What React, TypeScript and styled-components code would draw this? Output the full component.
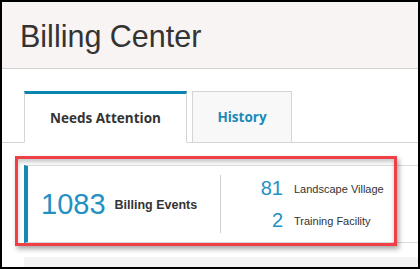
import styled, { createGlobalStyle } from "styled-components";

const GlobalStyle = createGlobalStyle`
  html, body {
    margin: 0;
    padding: 0;
    background: #ffffff;
  }
  body {
    font-family: "Liberation Sans", Arial, sans-serif;
  }
`;

const sites = [
  { count: 81, name: "Landscape Village" },
  { count: 2, name: "Training Facility" },
];

export default function App() {
  return (
    <>
      <GlobalStyle />
      <Frame>
        <Header>
          <Title>Billing Center</Title>
        </Header>
        <TabBar>
          <Tab $active>Needs Attention</Tab>
          <Tab>History</Tab>
        </TabBar>
        <Panel>
          <Card>
            <Summary>
              <BigCount>1083</BigCount>
              <SummaryLabel>Billing Events</SummaryLabel>
            </Summary>
            <Divider />
            <SiteGrid>
              {sites.map((site) => (
                <SiteRow key={site.name}>
                  <SiteCount>{site.count}</SiteCount>
                  <SiteName>{site.name}</SiteName>
                </SiteRow>
              ))}
            </SiteGrid>
          </Card>
          <NextCard />
          <Highlight />
        </Panel>
      </Frame>
    </>
  );
}

const Frame = styled.div`
  width: 420px;
  height: 269px;
  box-sizing: border-box;
  border: 2px solid #000;
  overflow: hidden;
  background: #fff;
`;

const Header = styled.div`
  height: 66px;
  background: #f8f4f3;
  border-bottom: 1px solid #d6d2d1;
  display: flex;
  align-items: center;
  padding-left: 18px;
`;

const Title = styled.h1`
  margin: 0;
  font-family: "Liberation Sans", Arial, sans-serif;
  font-weight: normal;
  font-size: 30.5px;
  color: #333;
  position: relative;
  top: 1px;
`;

const TabBar = styled.div`
  margin-top: 22px;
  padding-left: 22px;
  display: flex;
  gap: 5px;
  border-bottom: 1px solid #d5d5d5;
`;

const Tab = styled.div<{ $active?: boolean }>`
  box-sizing: border-box;
  height: 52px;
  margin-bottom: -1px;
  padding: 0;
  display: flex;
  align-items: center;
  justify-content: center;
  white-space: nowrap;
  font-family: "Open Sans", "Noto Sans", sans-serif;
  font-weight: 700;
  font-size: 13.5px;
  border: 1px solid #d5d5d5;
  border-top: ${(p) => (p.$active ? "3px solid #0a84b0" : "1px solid #d5d5d5")};
  border-bottom: ${(p) => (p.$active ? "1px solid #fff" : "1px solid #d5d5d5")};
  background: ${(p) => (p.$active ? "#fff" : "#f8f8f8")};
  color: ${(p) => (p.$active ? "#333" : "#1a8ab8")};
  width: ${(p) => (p.$active ? "163px" : "100px")};
`;

const Panel = styled.div`
  position: relative;
  padding: 22px 0 0 22px;
`;

const Card = styled.div`
  box-sizing: border-box;
  height: 78px;
  display: flex;
  align-items: center;
  border-top: 1px solid #dcdcdc;
  border-bottom: 1px solid #dcdcdc;
  border-left: 4px solid #1787b4;
`;

const Summary = styled.div`
  flex: 0 0 192px;
  box-sizing: border-box;
  padding-left: 13px;
  display: flex;
  align-items: center;
  gap: 9px;
`;

const BigCount = styled.span`
  font-size: 29px;
  color: #2590c2;
`;

const SummaryLabel = styled.span`
  font-size: 12.5px;
  font-weight: bold;
  color: #333;
  position: relative;
  top: 1px;
`;

const Divider = styled.div`
  width: 1px;
  height: 58px;
  background: #d0d0d0;
`;

const SiteGrid = styled.div`
  display: flex;
  flex-direction: column;
  gap: 8px;
`;

const SiteRow = styled.div`
  display: grid;
  grid-template-columns: 62px auto;
  column-gap: 11px;
  align-items: center;
  height: 24px;
`;

const SiteCount = styled.span`
  text-align: right;
  font-size: 20px;
  color: #2590c2;
`;

const SiteName = styled.span`
  font-size: 11px;
  color: #333;
  position: relative;
  top: 1px;
`;

const NextCard = styled.div`
  margin-top: 14px;
  height: 20px;
  background: #f4f4f4;
`;

const Highlight = styled.div`
  position: absolute;
  left: 13px;
  top: 13px;
  width: 382px;
  height: 90px;
  box-sizing: border-box;
  border: 3px solid #ee4046;
  box-shadow: 2px 3px 5px rgba(0, 0, 0, 0.35),
    inset 0 3px 4px rgba(0, 0, 0, 0.22);
  pointer-events: none;
`;
